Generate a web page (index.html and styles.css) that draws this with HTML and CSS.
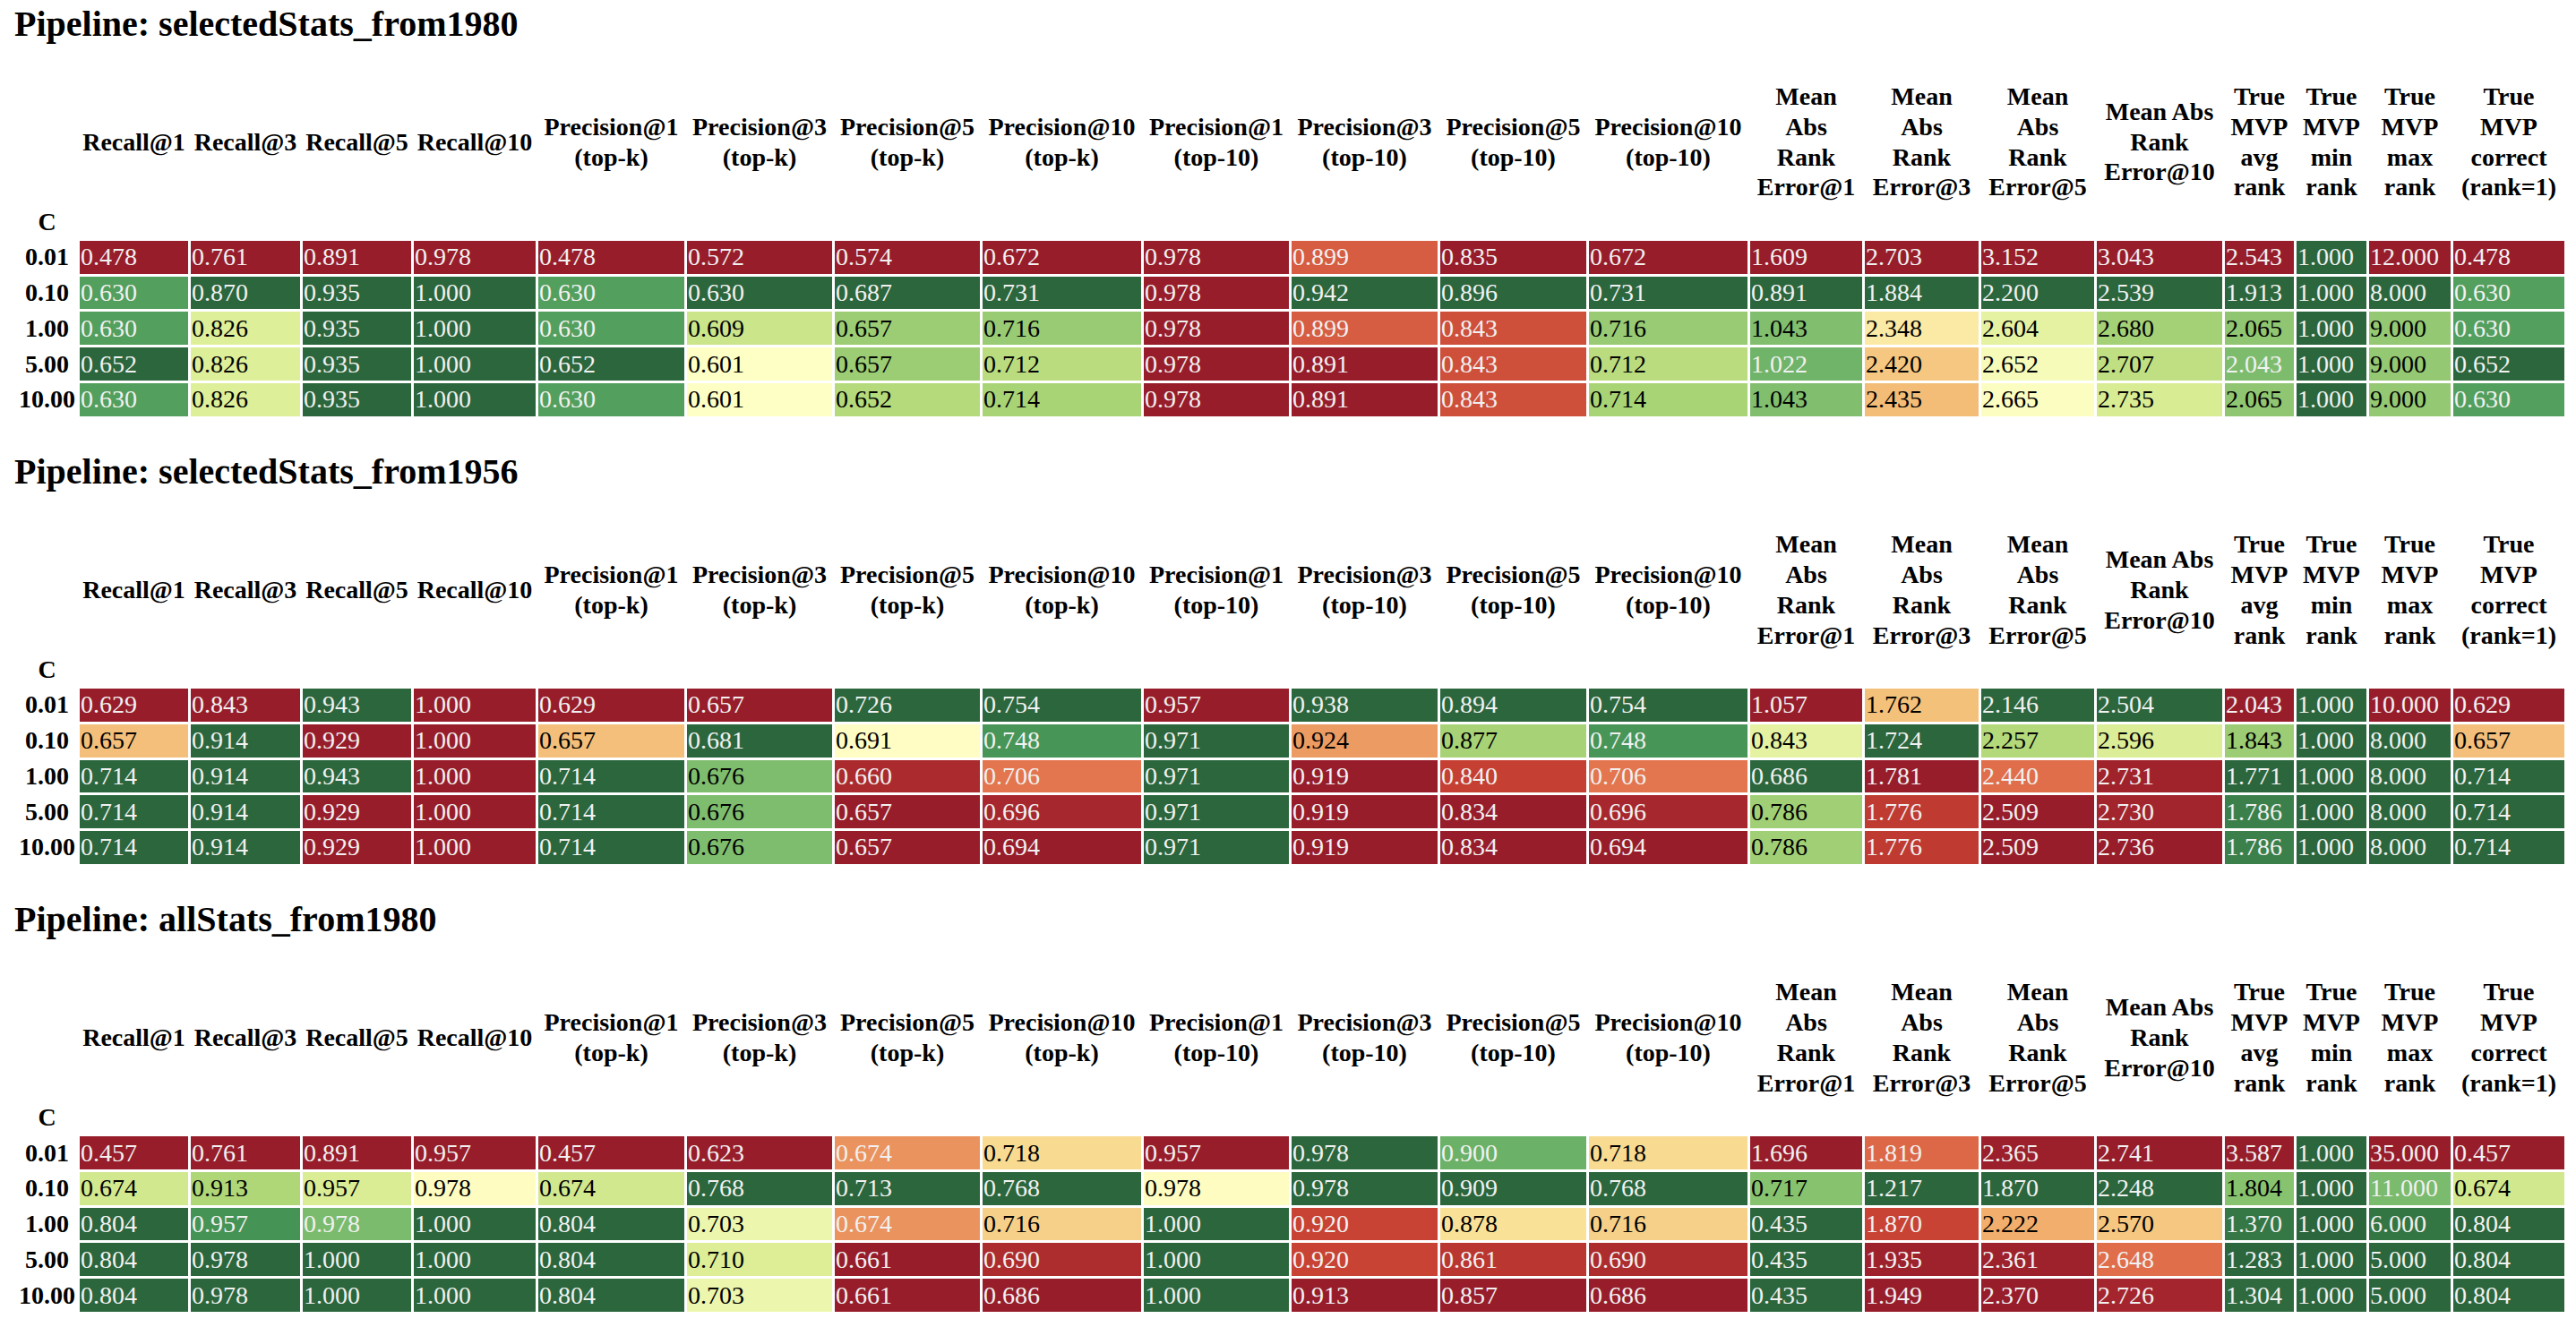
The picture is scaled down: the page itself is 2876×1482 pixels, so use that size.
FILE: index.html
```html
<!DOCTYPE html>
<html lang="en">
<head>
<meta charset="utf-8">
<title>Pipeline results</title>
<link rel="stylesheet" href="styles.css">
</head>
<body>

<section class="pipeline">
<h2 class="pipeline-title">Pipeline: selectedStats_from1980</h2>
<table class="stats">
<colgroup>
<col><col><col><col><col><col><col><col><col><col><col><col><col><col><col><col><col><col><col><col><col>
</colgroup>
<thead>
<tr class="col-heads">
<th class="blank"></th>
<th>Recall@1</th><th>Recall@3</th><th>Recall@5</th><th>Recall@10</th>
<th>Precision@1<br>(top-k)</th><th>Precision@3<br>(top-k)</th><th>Precision@5<br>(top-k)</th><th>Precision@10<br>(top-k)</th>
<th>Precision@1<br>(top-10)</th><th>Precision@3<br>(top-10)</th><th>Precision@5<br>(top-10)</th><th>Precision@10<br>(top-10)</th>
<th class="rev">Mean<br>Abs<br>Rank<br>Error@1</th><th class="rev">Mean<br>Abs<br>Rank<br>Error@3</th><th class="rev">Mean<br>Abs<br>Rank<br>Error@5</th><th class="rev">Mean Abs<br>Rank<br>Error@10</th>
<th class="rev">True<br>MVP<br>avg<br>rank</th><th class="rev">True<br>MVP<br>min<br>rank</th><th class="rev">True<br>MVP<br>max<br>rank</th><th>True<br>MVP<br>correct<br>(rank=1)</th>
</tr>
<tr class="index-name">
<th>C</th><th></th><th></th><th></th><th></th><th></th><th></th><th></th><th></th><th></th><th></th><th></th><th></th><th></th><th></th><th></th><th></th><th></th><th></th><th></th><th></th>
</tr>
</thead>
<tbody>
<tr><th>0.01</th><td>0.478</td><td>0.761</td><td>0.891</td><td>0.978</td><td>0.478</td><td>0.572</td><td>0.574</td><td>0.672</td><td>0.978</td><td>0.899</td><td>0.835</td><td>0.672</td><td>1.609</td><td>2.703</td><td>3.152</td><td>3.043</td><td>2.543</td><td>1.000</td><td>12.000</td><td>0.478</td></tr>
<tr><th>0.10</th><td>0.630</td><td>0.870</td><td>0.935</td><td>1.000</td><td>0.630</td><td>0.630</td><td>0.687</td><td>0.731</td><td>0.978</td><td>0.942</td><td>0.896</td><td>0.731</td><td>0.891</td><td>1.884</td><td>2.200</td><td>2.539</td><td>1.913</td><td>1.000</td><td>8.000</td><td>0.630</td></tr>
<tr><th>1.00</th><td>0.630</td><td>0.826</td><td>0.935</td><td>1.000</td><td>0.630</td><td>0.609</td><td>0.657</td><td>0.716</td><td>0.978</td><td>0.899</td><td>0.843</td><td>0.716</td><td>1.043</td><td>2.348</td><td>2.604</td><td>2.680</td><td>2.065</td><td>1.000</td><td>9.000</td><td>0.630</td></tr>
<tr><th>5.00</th><td>0.652</td><td>0.826</td><td>0.935</td><td>1.000</td><td>0.652</td><td>0.601</td><td>0.657</td><td>0.712</td><td>0.978</td><td>0.891</td><td>0.843</td><td>0.712</td><td>1.022</td><td>2.420</td><td>2.652</td><td>2.707</td><td>2.043</td><td>1.000</td><td>9.000</td><td>0.652</td></tr>
<tr><th>10.00</th><td>0.630</td><td>0.826</td><td>0.935</td><td>1.000</td><td>0.630</td><td>0.601</td><td>0.652</td><td>0.714</td><td>0.978</td><td>0.891</td><td>0.843</td><td>0.714</td><td>1.043</td><td>2.435</td><td>2.665</td><td>2.735</td><td>2.065</td><td>1.000</td><td>9.000</td><td>0.630</td></tr>
</tbody>
</table>
</section>

<section class="pipeline">
<h2 class="pipeline-title">Pipeline: selectedStats_from1956</h2>
<table class="stats">
<colgroup>
<col><col><col><col><col><col><col><col><col><col><col><col><col><col><col><col><col><col><col><col><col>
</colgroup>
<thead>
<tr class="col-heads">
<th class="blank"></th>
<th>Recall@1</th><th>Recall@3</th><th>Recall@5</th><th>Recall@10</th>
<th>Precision@1<br>(top-k)</th><th>Precision@3<br>(top-k)</th><th>Precision@5<br>(top-k)</th><th>Precision@10<br>(top-k)</th>
<th>Precision@1<br>(top-10)</th><th>Precision@3<br>(top-10)</th><th>Precision@5<br>(top-10)</th><th>Precision@10<br>(top-10)</th>
<th class="rev">Mean<br>Abs<br>Rank<br>Error@1</th><th class="rev">Mean<br>Abs<br>Rank<br>Error@3</th><th class="rev">Mean<br>Abs<br>Rank<br>Error@5</th><th class="rev">Mean Abs<br>Rank<br>Error@10</th>
<th class="rev">True<br>MVP<br>avg<br>rank</th><th class="rev">True<br>MVP<br>min<br>rank</th><th class="rev">True<br>MVP<br>max<br>rank</th><th>True<br>MVP<br>correct<br>(rank=1)</th>
</tr>
<tr class="index-name">
<th>C</th><th></th><th></th><th></th><th></th><th></th><th></th><th></th><th></th><th></th><th></th><th></th><th></th><th></th><th></th><th></th><th></th><th></th><th></th><th></th><th></th>
</tr>
</thead>
<tbody>
<tr><th>0.01</th><td>0.629</td><td>0.843</td><td>0.943</td><td>1.000</td><td>0.629</td><td>0.657</td><td>0.726</td><td>0.754</td><td>0.957</td><td>0.938</td><td>0.894</td><td>0.754</td><td>1.057</td><td>1.762</td><td>2.146</td><td>2.504</td><td>2.043</td><td>1.000</td><td>10.000</td><td>0.629</td></tr>
<tr><th>0.10</th><td>0.657</td><td>0.914</td><td>0.929</td><td>1.000</td><td>0.657</td><td>0.681</td><td>0.691</td><td>0.748</td><td>0.971</td><td>0.924</td><td>0.877</td><td>0.748</td><td>0.843</td><td>1.724</td><td>2.257</td><td>2.596</td><td>1.843</td><td>1.000</td><td>8.000</td><td>0.657</td></tr>
<tr><th>1.00</th><td>0.714</td><td>0.914</td><td>0.943</td><td>1.000</td><td>0.714</td><td>0.676</td><td>0.660</td><td>0.706</td><td>0.971</td><td>0.919</td><td>0.840</td><td>0.706</td><td>0.686</td><td>1.781</td><td>2.440</td><td>2.731</td><td>1.771</td><td>1.000</td><td>8.000</td><td>0.714</td></tr>
<tr><th>5.00</th><td>0.714</td><td>0.914</td><td>0.929</td><td>1.000</td><td>0.714</td><td>0.676</td><td>0.657</td><td>0.696</td><td>0.971</td><td>0.919</td><td>0.834</td><td>0.696</td><td>0.786</td><td>1.776</td><td>2.509</td><td>2.730</td><td>1.786</td><td>1.000</td><td>8.000</td><td>0.714</td></tr>
<tr><th>10.00</th><td>0.714</td><td>0.914</td><td>0.929</td><td>1.000</td><td>0.714</td><td>0.676</td><td>0.657</td><td>0.694</td><td>0.971</td><td>0.919</td><td>0.834</td><td>0.694</td><td>0.786</td><td>1.776</td><td>2.509</td><td>2.736</td><td>1.786</td><td>1.000</td><td>8.000</td><td>0.714</td></tr>
</tbody>
</table>
</section>

<section class="pipeline">
<h2 class="pipeline-title">Pipeline: allStats_from1980</h2>
<table class="stats">
<colgroup>
<col><col><col><col><col><col><col><col><col><col><col><col><col><col><col><col><col><col><col><col><col>
</colgroup>
<thead>
<tr class="col-heads">
<th class="blank"></th>
<th>Recall@1</th><th>Recall@3</th><th>Recall@5</th><th>Recall@10</th>
<th>Precision@1<br>(top-k)</th><th>Precision@3<br>(top-k)</th><th>Precision@5<br>(top-k)</th><th>Precision@10<br>(top-k)</th>
<th>Precision@1<br>(top-10)</th><th>Precision@3<br>(top-10)</th><th>Precision@5<br>(top-10)</th><th>Precision@10<br>(top-10)</th>
<th class="rev">Mean<br>Abs<br>Rank<br>Error@1</th><th class="rev">Mean<br>Abs<br>Rank<br>Error@3</th><th class="rev">Mean<br>Abs<br>Rank<br>Error@5</th><th class="rev">Mean Abs<br>Rank<br>Error@10</th>
<th class="rev">True<br>MVP<br>avg<br>rank</th><th class="rev">True<br>MVP<br>min<br>rank</th><th class="rev">True<br>MVP<br>max<br>rank</th><th>True<br>MVP<br>correct<br>(rank=1)</th>
</tr>
<tr class="index-name">
<th>C</th><th></th><th></th><th></th><th></th><th></th><th></th><th></th><th></th><th></th><th></th><th></th><th></th><th></th><th></th><th></th><th></th><th></th><th></th><th></th><th></th>
</tr>
</thead>
<tbody>
<tr><th>0.01</th><td>0.457</td><td>0.761</td><td>0.891</td><td>0.957</td><td>0.457</td><td>0.623</td><td>0.674</td><td>0.718</td><td>0.957</td><td>0.978</td><td>0.900</td><td>0.718</td><td>1.696</td><td>1.819</td><td>2.365</td><td>2.741</td><td>3.587</td><td>1.000</td><td>35.000</td><td>0.457</td></tr>
<tr><th>0.10</th><td>0.674</td><td>0.913</td><td>0.957</td><td>0.978</td><td>0.674</td><td>0.768</td><td>0.713</td><td>0.768</td><td>0.978</td><td>0.978</td><td>0.909</td><td>0.768</td><td>0.717</td><td>1.217</td><td>1.870</td><td>2.248</td><td>1.804</td><td>1.000</td><td>11.000</td><td>0.674</td></tr>
<tr><th>1.00</th><td>0.804</td><td>0.957</td><td>0.978</td><td>1.000</td><td>0.804</td><td>0.703</td><td>0.674</td><td>0.716</td><td>1.000</td><td>0.920</td><td>0.878</td><td>0.716</td><td>0.435</td><td>1.870</td><td>2.222</td><td>2.570</td><td>1.370</td><td>1.000</td><td>6.000</td><td>0.804</td></tr>
<tr><th>5.00</th><td>0.804</td><td>0.978</td><td>1.000</td><td>1.000</td><td>0.804</td><td>0.710</td><td>0.661</td><td>0.690</td><td>1.000</td><td>0.920</td><td>0.861</td><td>0.690</td><td>0.435</td><td>1.935</td><td>2.361</td><td>2.648</td><td>1.283</td><td>1.000</td><td>5.000</td><td>0.804</td></tr>
<tr><th>10.00</th><td>0.804</td><td>0.978</td><td>1.000</td><td>1.000</td><td>0.804</td><td>0.703</td><td>0.661</td><td>0.686</td><td>1.000</td><td>0.913</td><td>0.857</td><td>0.686</td><td>0.435</td><td>1.949</td><td>2.370</td><td>2.726</td><td>1.304</td><td>1.000</td><td>5.000</td><td>0.804</td></tr>
</tbody>
</table>
</section>

<script src="script.js"></script>
</body>
</html>
```

FILE: styles.css
```css
html, body {
  margin: 0;
  padding: 0;
  background: #ffffff;
}

body {
  font-family: "Liberation Serif", "Times New Roman", serif;
  color: #000000;
  padding-left: 16px;
}

.pipeline-title {
  font-size: 40px;
  font-weight: bold;
  line-height: 49px;
  margin: 34.4px 0 36px 0;
}

.pipeline:first-child .pipeline-title {
  margin-top: 2px;
}

.stats {
  table-layout: fixed;
  width: 2850px;
  border-collapse: separate;
  border-spacing: 3px;
  font-size: 28px;
}

.stats col:nth-child(1)  { width: 67px; }
.stats col:nth-child(2)  { width: 121px; }
.stats col:nth-child(3)  { width: 122px; }
.stats col:nth-child(4)  { width: 121px; }
.stats col:nth-child(5)  { width: 136px; }
.stats col:nth-child(6)  { width: 163px; }
.stats col:nth-child(7)  { width: 162px; }
.stats col:nth-child(8)  { width: 162px; }
.stats col:nth-child(9)  { width: 177px; }
.stats col:nth-child(10) { width: 162px; }
.stats col:nth-child(11) { width: 163px; }
.stats col:nth-child(12) { width: 163px; }
.stats col:nth-child(13) { width: 177px; }
.stats col:nth-child(14) { width: 125px; }
.stats col:nth-child(15) { width: 127px; }
.stats col:nth-child(16) { width: 126px; }
.stats col:nth-child(17) { width: 140px; }
.stats col:nth-child(18) { width: 77px; }
.stats col:nth-child(19) { width: 78px; }
.stats col:nth-child(20) { width: 91px; }
.stats col:nth-child(21) { width: 124px; }

.stats th,
.stats td {
  padding: 1px;
  white-space: nowrap;
  overflow: hidden;
}

.stats thead th {
  font-weight: bold;
  text-align: center;
  vertical-align: middle;
  line-height: 33.8px;
}

.stats tbody tr {
  height: 36.75px;
}

.stats tbody th {
  font-weight: bold;
  text-align: center;
  vertical-align: middle;
  line-height: 30px;
  padding: 0 1px;
}

.stats td {
  text-align: left;
  vertical-align: middle;
  line-height: 30px;
  padding: 0 1px;
  background: #ffffff;
}
```

FILE: script.js
```js
(function () {
  // matplotlib RdYlGn control points (ColorBrewer)
  var STOPS = [
    [165, 0, 38], [215, 48, 39], [244, 109, 67], [253, 174, 97], [254, 224, 139],
    [255, 255, 191], [217, 239, 139], [166, 217, 106], [102, 189, 99], [26, 152, 80], [0, 104, 55]
  ];

  function cmap(x) {
    x = Math.min(1, Math.max(0, x));
    var i = Math.min(255, Math.floor(x * 256));
    var t = (i / 255) * 10;
    var k = Math.min(9, Math.floor(t));
    var f = t - k;
    return STOPS[k].map(function (c, j) { return c + (STOPS[k + 1][j] - c) * f; });
  }

  function toLinear(v) {
    v = v / 255;
    return v <= 0.04045 ? v / 12.92 : Math.pow((v + 0.055) / 1.055, 2.4);
  }

  function luminance(rgb) {
    var c = rgb.map(function (v) {
      v = v / 255;
      return v <= 0.03928 ? v / 12.92 : Math.pow((v + 0.055) / 1.055, 2.4);
    });
    return 0.2126 * c[0] + 0.7152 * c[1] + 0.0722 * c[2];
  }

  // the reference capture stores colours as Display P3 values
  var M = [
    [0.822462, 0.177538, 0.0],
    [0.033194, 0.966806, 0.0],
    [0.017083, 0.072397, 0.910520]
  ];
  function toP3(rgb) {
    var lin = rgb.map(toLinear);
    return M.map(function (r) {
      var l = r[0] * lin[0] + r[1] * lin[1] + r[2] * lin[2];
      var v = l <= 0.0031308 ? 12.92 * l : 1.055 * Math.pow(l, 1 / 2.4) - 0.055;
      return Math.round(Math.max(0, Math.min(1, v)) * 255);
    });
  }

  document.querySelectorAll('table.stats').forEach(function (table) {
    var heads = table.querySelectorAll('thead tr.col-heads th');
    var rows = Array.prototype.slice.call(table.querySelectorAll('tbody tr'));
    var ncol = heads.length - 1;
    for (var c = 0; c < ncol; c++) {
      var rev = heads[c + 1].classList.contains('rev');
      var cells = rows.map(function (r) { return r.querySelectorAll('td')[c]; });
      var vals = cells.map(function (td) { return parseFloat(td.textContent); });
      var mn = Math.min.apply(null, vals);
      var mx = Math.max.apply(null, vals);
      cells.forEach(function (td, i) {
        var x = mx === mn ? 0 : (vals[i] - mn) / (mx - mn);
        var rgb = cmap(rev ? 1 - x : x);
        var bg = toP3(rgb);
        td.style.backgroundColor = 'rgb(' + bg.join(',') + ')';
        td.style.color = luminance(rgb) < 0.408 ? '#f1f1f1' : '#000000';
      });
    }
  });
})();
```
